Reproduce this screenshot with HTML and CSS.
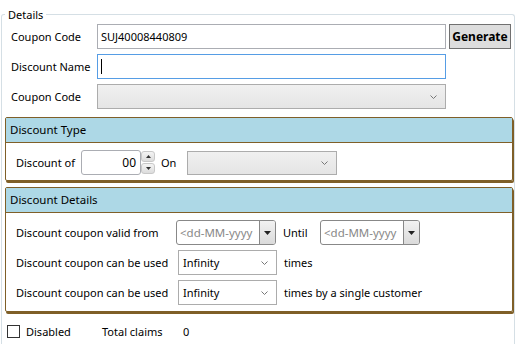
FILE: index.html
```html
<!DOCTYPE html>
<html lang="en">
<head>
	<meta charset="UTF-8">
	<title>Coupon</title>
	<link rel="stylesheet" href="styles.css">
</head>
<body>
	<fieldset class="details">
		<legend>Details</legend>

		<div class="row">
			<label class="label">Coupon Code</label>
			<div class="textbox">SUJ40008440809</div>
			<button class="generate">Generate</button>
		</div>
		<div class="row">
			<label class="label">Discount Name</label>
			<div class="textbox focused"><span class="caret"></span></div>
		</div>
		<div class="row">
			<label class="label">Coupon Code</label>
			<div class="combo disabled wide"><span></span>
				<svg class="chev" width="7" height="4" viewBox="0 0 7 4"><path d="M0.5 0.5 L3.5 3.5 L6.5 0.5" fill="none" stroke="#777" stroke-width="1"/></svg>
			</div>
		</div>

		<section class="panel">
			<header class="panel-head">Discount Type</header>
			<div class="panel-body">
				<div class="row">
					<span class="text of">Discount of</span>
					<div class="spinner">
						<div class="spin-value">00</div>
						<div class="spin-buttons">
							<span class="spin up"><svg width="5" height="3" viewBox="0 0 5 3"><path d="M0 3 L2.5 0 L5 3 Z" fill="#333"/></svg></span>
							<span class="spin down"><svg width="5" height="3" viewBox="0 0 5 3"><path d="M0 0 L2.5 3 L5 0 Z" fill="#333"/></svg></span>
						</div>
					</div>
					<span class="text on">On</span>
					<div class="combo disabled type"><span></span>
						<svg class="chev" width="7" height="4" viewBox="0 0 7 4"><path d="M0.5 0.5 L3.5 3.5 L6.5 0.5" fill="none" stroke="#777" stroke-width="1"/></svg>
					</div>
				</div>
			</div>
		</section>

		<section class="panel">
			<header class="panel-head">Discount Details</header>
			<div class="panel-body details-body">
				<div class="row">
					<span class="text long">Discount coupon valid from</span>
					<div class="datepicker">
						<span class="date-text">&lt;dd-MM-yyyy</span>
						<span class="date-btn"><svg width="7" height="4" viewBox="0 0 7 4"><path d="M0 0 L3.5 4 L7 0 Z" fill="#222"/></svg></span>
					</div>
					<span class="text until">Until</span>
					<div class="datepicker">
						<span class="date-text">&lt;dd-MM-yyyy</span>
						<span class="date-btn"><svg width="7" height="4" viewBox="0 0 7 4"><path d="M0 0 L3.5 4 L7 0 Z" fill="#222"/></svg></span>
					</div>
				</div>
				<div class="row">
					<span class="text long">Discount coupon can be used</span>
					<div class="combo plain"><span>Infinity</span>
						<svg class="chev" width="7" height="4" viewBox="0 0 7 4"><path d="M0.5 0.5 L3.5 3.5 L6.5 0.5" fill="none" stroke="#777" stroke-width="1"/></svg>
					</div>
					<span class="text after">times</span>
				</div>
				<div class="row">
					<span class="text long">Discount coupon can be used</span>
					<div class="combo plain"><span>Infinity</span>
						<svg class="chev" width="7" height="4" viewBox="0 0 7 4"><path d="M0.5 0.5 L3.5 3.5 L6.5 0.5" fill="none" stroke="#777" stroke-width="1"/></svg>
					</div>
					<span class="text after">times by a single customer</span>
				</div>
			</div>
		</section>

		<div class="footer">
			<span class="checkbox"></span>
			<span class="text disabled-label">Disabled</span>
			<span class="text claims">Total claims</span>
			<span class="text">0</span>
		</div>
	</fieldset>
</body>
</html>
```

FILE: styles.css
```css
html {
	box-sizing: border-box;
	height: 344px;
	overflow: hidden;
}

*, *:before, *:after {
	box-sizing: inherit;
}

body {
	margin: 0;
	height: 344px;
	overflow: hidden;
	background: #fff;
	font-family: "Noto Sans", "Open Sans", sans-serif;
	font-size: 11px;
	color: #000;
}

.details {
	margin: 7px 0 0 1px;
	width: 514px;
	height: 337px;
	padding: 0;
	border: 1px solid #d5dfe5;
	border-bottom: 0;
	border-radius: 3px 3px 0 0;
}

.details legend {
	margin-left: 3px;
	padding: 0 3px;
	line-height: 15px;
}

.row {
	display: flex;
	align-items: center;
	height: 25px;
	margin-top: 5px;
}

.details > .row {
	padding-left: 9px;
}

.details > .row:first-of-type {
	margin-top: 2px;
}

.label {
	width: 86px;
	flex-shrink: 0;
	white-space: nowrap;
}

.textbox {
	width: 349px;
	height: 25px;
	border: 1px solid #abadb3;
	padding: 0 3px;
	line-height: 23px;
	display: flex;
	align-items: center;
}

.textbox.focused {
	border-color: #569de5;
}

.caret {
	width: 1px;
	height: 15px;
	background: #000;
}

.generate {
	margin-left: 3px;
	width: 62px;
	height: 25px;
	padding: 0;
	border: 1px solid #707070;
	background: #dddddd;
	font-family: inherit;
	font-size: 12px;
	font-weight: bold;
	color: #000;
}

.combo {
	height: 25px;
	flex-shrink: 0;
	border: 1px solid #acacac;
	display: flex;
	align-items: center;
	justify-content: space-between;
	padding: 0 8px 0 4px;
	background: #fff;
}

.combo.disabled {
	background: linear-gradient(#f0f0f0, #e5e5e5);
}

.combo.wide {
	width: 349px;
}

.combo.type {
	width: 150px;
	height: 24px;
}

.combo.plain {
	width: 99px;
	margin-left: 2px;
}

.panel {
	margin: 8px 0 0 3px;
	width: 508px;
	border: 1px solid #7f5f28;
	box-shadow: 1px 2px 0 #7f5f28;
	border-radius: 2px;
}

.panel + .panel {
	margin-top: 6px;
}

.panel-head {
	height: 25px;
	background: #add8e6;
	border-bottom: 1px solid #7f5f28;
	padding-left: 4px;
	line-height: 24px;
	font-size: 11.5px;
}

.panel-body {
	padding: 1px 0 5px 10px;
}

.details-body {
	padding-bottom: 6px;
}

.panel-body .row:first-child {
	margin-top: 6px;
}

.text {
	white-space: nowrap;
	flex-shrink: 0;
}

.of {
	width: 65px;
}

.spinner {
	display: flex;
	height: 25px;
}

.spin-value {
	width: 60px;
	height: 25px;
	border: 1px solid #abadb3;
	border-radius: 3px;
	text-align: right;
	padding-right: 4px;
	line-height: 23px;
	font-size: 12px;
}

.spin-buttons {
	display: flex;
	flex-direction: column;
	gap: 1px;
	width: 14px;
	padding: 1px 0;
}

.spin {
	flex: 1;
	display: flex;
	align-items: center;
	justify-content: center;
	background: linear-gradient(#f4f4f4, #dcdcdc);
	border: 1px solid #c8c8c8;
	border-radius: 3px;
}

.on {
	width: 32px;
	padding-left: 6px;
}

.long {
	width: 160px;
}

.datepicker {
	display: flex;
	flex-shrink: 0;
	height: 25px;
	width: 100px;
	border: 1px solid #888;
	border-radius: 3px;
	overflow: hidden;
}

.date-text {
	flex: 1;
	overflow: hidden;
	white-space: nowrap;
	color: #888;
	padding-left: 3px;
	line-height: 23px;
	font-size: 11.5px;
}

.date-btn {
	width: 16px;
	flex-shrink: 0;
	display: flex;
	align-items: center;
	justify-content: center;
	border-left: 1px solid #888;
	background: linear-gradient(#f2f2f2, #dadada);
}

.until {
	width: 44px;
	padding-left: 7px;
}

.after {
	margin-left: 7px;
}

.footer {
	display: flex;
	align-items: center;
	margin-top: 11px;
	padding-left: 5px;
	height: 16px;
}

.checkbox {
	width: 13px;
	height: 13px;
	border: 1px solid #333;
	flex-shrink: 0;
}

.disabled-label {
	width: 82px;
	padding-left: 6px;
}

.claims {
	width: 81px;
}
```
